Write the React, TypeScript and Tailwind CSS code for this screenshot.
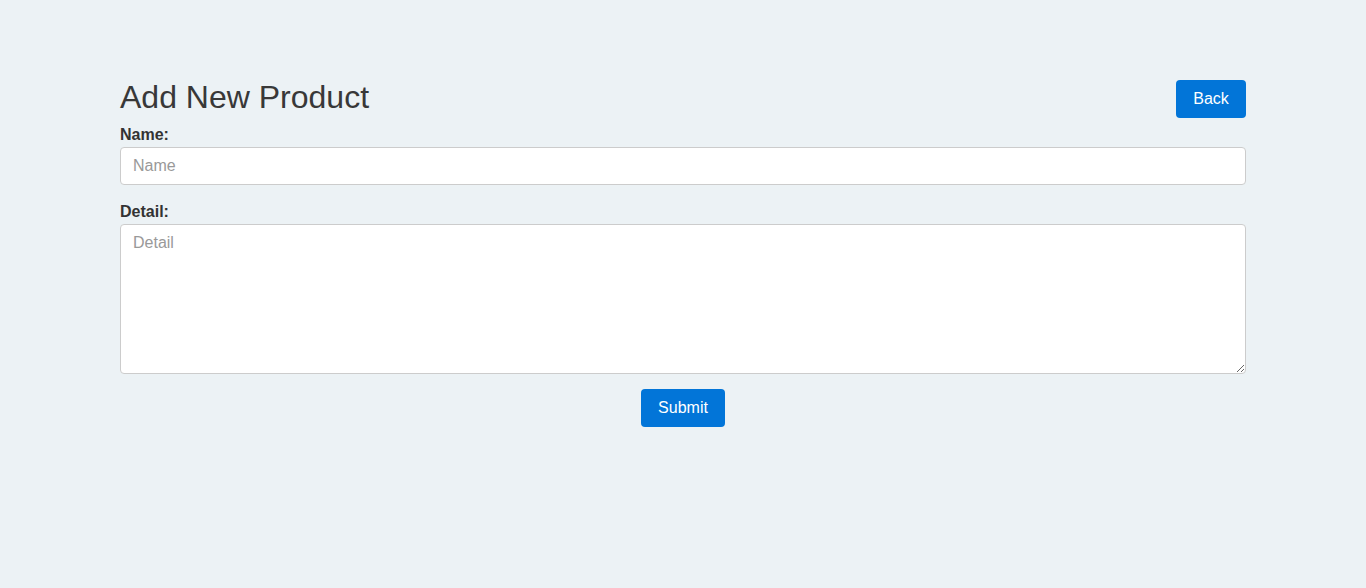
export default function App() {
  return (
    <div className="min-h-[588px] w-full bg-[#ecf2f5] font-['Liberation_Sans',Arial,sans-serif] text-[#333]">
      <div className="mx-auto w-[1126px] pt-[80px]">
        {/* Header */}
        <div className="flex items-start justify-between">
          <h1 className="text-[32px] leading-[34px] font-normal text-[#383838]">Add New Product</h1>
          <button className="h-[38px] w-[70px] rounded-[4px] bg-[#0275d8] text-[16px] text-white">Back</button>
        </div>

        <form className="flex flex-col">
          <label className="mt-[7px] text-[16px] leading-[19px] font-bold">Name:</label>
          <input
            type="text"
            placeholder="Name"
            className="mt-[3px] h-[38px] w-full rounded-[4px] border border-[#ccc] bg-white px-[12px] text-[16px] placeholder:text-[#999] outline-none"
          />

          <label className="mt-[17px] text-[16px] leading-[19px] font-bold">Detail:</label>
          <textarea
            placeholder="Detail"
            className="mt-[3px] h-[150px] w-full rounded-[4px] border border-[#ccc] bg-white px-[12px] py-[6px] text-[16px] placeholder:text-[#999] outline-none"
          />

          <div className="mt-[15px] flex justify-center">
            <button type="button" className="h-[38px] w-[84px] rounded-[4px] bg-[#0275d8] text-[16px] text-white">Submit</button>
          </div>
        </form>
      </div>
    </div>
  );
}
